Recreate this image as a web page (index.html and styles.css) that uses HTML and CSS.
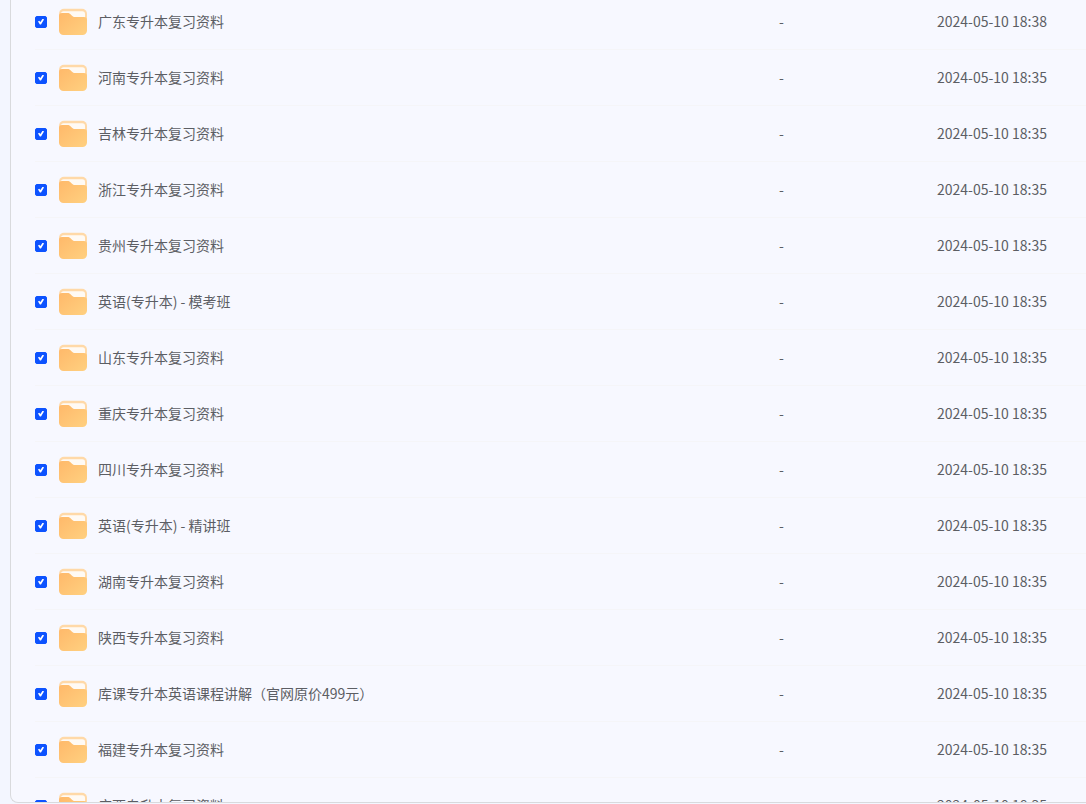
FILE: index.html
```html
<!DOCTYPE html>
<html lang="zh-CN">
<head>
    <meta charset="UTF-8">
    <title>文件列表</title>
    <link rel="stylesheet" href="styles.css">
    <script src="files.js" defer></script>
</head>
<body>
<svg width="0" height="0" class="defs" aria-hidden="true">
    <defs>
        <linearGradient id="folder-front" x1="0" y1="0" x2="1" y2="1">
            <stop offset="0" stop-color="#ffb96a"/>
            <stop offset="1" stop-color="#ffd080"/>
        </linearGradient>
        <symbol id="folder" viewBox="0 0 28 28">
            <rect x="0" y="0.700" width="28" height="25" rx="5" fill="#ffd9a8"/>
            <path d="M2 6a2.700 2.700 0 0 1 2.700-2.700h18.600a2.700 2.700 0 0 1 2.700 2.700v6H2z" fill="#fffaf4"/>
            <path d="M0 8a3 3 0 0 1 3-3h5.500c1.300 0 2 .3 3 1.300l1.500 1.500c.9.900 1.700 1.200 3 1.200h9c2 0 3 1 3 3V22.500a4.500 4.500 0 0 1-4.500 4.500h-19A4.500 4.500 0 0 1 0 22.500z" fill="url(#folder-front)"/>
        </symbol>
    </defs>
</svg>
<main class="panel">
    <table class="file-table">
        <colgroup>
            <col>
            <col class="col-size">
            <col class="col-date">
        </colgroup>
        <tbody id="file-list"></tbody>
    </table>
</main>
</body>
</html>
```

FILE: styles.css
```css
* {
    box-sizing: border-box;
}
body {
    margin: 0;
    height: 100vh;
    padding: 0 0 1px 10px;
    background: #f3f6ff;
    color: #5c5e64;
    font-family: "Noto Sans CJK SC", sans-serif;
    font-size: 14px;
    line-height: 20px;
    overflow: hidden;
}
.defs {
    position: absolute;
}
.panel {
    height: 100%;
    padding-left: 24px;
    background: #f7f8ff;
    border: 1px solid #d9dadd;
    border-width: 0 0 1px 1px;
    border-radius: 0 0 0 8px;
    overflow: hidden;
}
/* list is scrolled slightly past its first row */
.file-table {
    width: 100%;
    margin-top: -6px;
    table-layout: fixed;
    border-collapse: separate;
    border-spacing: 0;
}
.col-size {
    width: 158px;
}
.col-date {
    width: 149px;
}
.file-table td {
    height: 56px;
    padding: 0;
    border-bottom: 1px solid #f5f5f8;
    white-space: nowrap;
}
.file-table .file-meta,
.file-name label {
    padding-bottom: 2px;
}
.file-name {
    display: flex;
    align-items: center;
}
.file-name input {
    appearance: none;
    display: grid;
    place-items: center;
    width: 12px;
    height: 12px;
    margin: 0 12px 0 0;
    border: 1px solid #c4c8d4;
    border-radius: 2px;
    background: #fff;
}
.file-name input:checked {
    border-color: #0d53ff;
    background: #0d53ff;
}
.file-name input:checked::before {
    content: "";
    width: 6px;
    height: 6px;
    background: #fff;
    clip-path: polygon(0 48%, 20% 36%, 40% 58%, 78% 0, 100% 16%, 50% 100%, 32% 100%);
}
.folder {
    width: 28px;
    height: 28px;
    margin-right: 11px;
}
```

FILE: files.js
```js
const files = [
    ["广东专升本复习资料", "2024-05-10 18:38"],
    ["河南专升本复习资料", "2024-05-10 18:35"],
    ["吉林专升本复习资料", "2024-05-10 18:35"],
    ["浙江专升本复习资料", "2024-05-10 18:35"],
    ["贵州专升本复习资料", "2024-05-10 18:35"],
    ["英语(专升本) - 模考班", "2024-05-10 18:35"],
    ["山东专升本复习资料", "2024-05-10 18:35"],
    ["重庆专升本复习资料", "2024-05-10 18:35"],
    ["四川专升本复习资料", "2024-05-10 18:35"],
    ["英语(专升本) - 精讲班", "2024-05-10 18:35"],
    ["湖南专升本复习资料", "2024-05-10 18:35"],
    ["陕西专升本复习资料", "2024-05-10 18:35"],
    ["库课专升本英语课程讲解（官网原价499元）", "2024-05-10 18:35"],
    ["福建专升本复习资料", "2024-05-10 18:35"],
    ["广西专升本复习资料", "2024-05-10 18:35"]
];

document.getElementById("file-list").innerHTML = files.map(([name, date], i) => `
    <tr>
        <td>
            <div class="file-name">
                <input type="checkbox" id="file-${i}" checked>
                <svg class="folder" aria-hidden="true"><use href="#folder"/></svg>
                <label for="file-${i}">${name}</label>
            </div>
        </td>
        <td class="file-meta">-</td>
        <td class="file-meta">${date}</td>
    </tr>`).join("");
```
